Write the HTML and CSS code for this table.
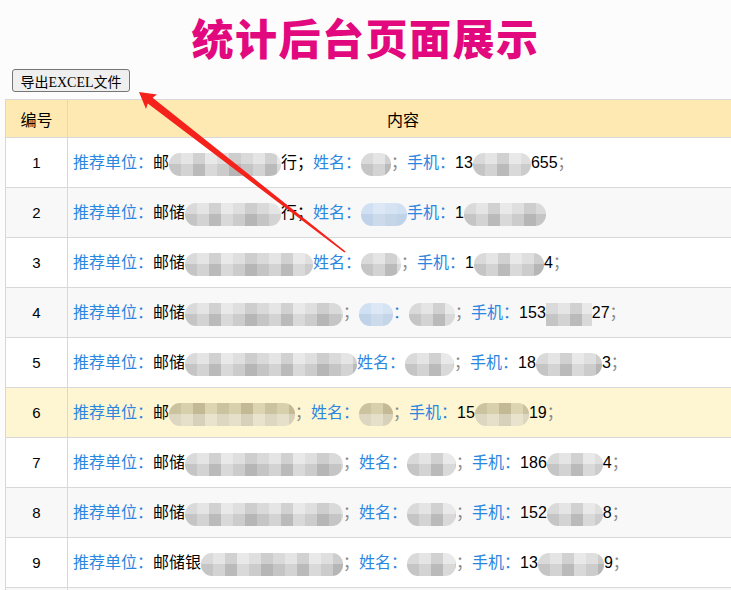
FILE: index.html
```html
<!DOCTYPE html>
<html>
<head>
	<meta charset="utf-8">
	<link rel="stylesheet" href="styles.css">
</head>
<body>
	<h1>统计后台页面展示</h1>
	<div class="toolbar">
		<button type="button">导出EXCEL文件</button>
	</div>

	<table class="list">
		<thead>
			<tr>
				<th class="col-no">编号</th>
				<th>内容</th>
			</tr>
		</thead>
		<tbody>
			<tr>
				<td class="col-no">1</td>
				<td><span class="lbl">推荐单位：</span>邮<span class="mask" style="width:112px"></span>行；<span class="lbl">姓名：</span><span class="mask" style="width:30px"></span><span class="semi">；</span><span class="lbl">手机：</span><span class="num">13</span><span class="mask" style="width:58px"></span><span class="num">655</span><span class="semi">；</span></td>
			</tr>
			<tr>
				<td class="col-no">2</td>
				<td><span class="lbl">推荐单位：</span>邮储<span class="mask" style="width:96px"></span>行；<span class="lbl">姓名：</span><span class="mask mask-blue" style="width:46px"></span><span class="lbl">手机：</span><span class="num">1</span><span class="mask" style="width:82px"></span></td>
			</tr>
			<tr>
				<td class="col-no">3</td>
				<td><span class="lbl">推荐单位：</span>邮储<span class="mask" style="width:128px"></span><span class="lbl">姓名：</span><span class="mask" style="width:40px"></span><span class="semi">；</span><span class="lbl">手机：</span><span class="num">1</span><span class="mask" style="width:70px"></span><span class="num">4</span><span class="semi">；</span></td>
			</tr>
			<tr>
				<td class="col-no">4</td>
				<td><span class="lbl">推荐单位：</span>邮储<span class="mask" style="width:158px"></span><span class="semi">；</span><span class="mask mask-blue" style="width:34px"></span><span class="lbl">：</span><span class="mask" style="width:46px"></span><span class="semi">；</span><span class="lbl">手机：</span><span class="num">153</span><span class="mask mask-flat" style="width:46px"></span><span class="num">27</span><span class="semi">；</span></td>
			</tr>
			<tr>
				<td class="col-no">5</td>
				<td><span class="lbl">推荐单位：</span>邮储<span class="mask" style="width:172px"></span><span class="lbl">姓名：</span><span class="mask" style="width:49px"></span><span class="semi">；</span><span class="lbl">手机：</span><span class="num">18</span><span class="mask" style="width:66px"></span><span class="num">3</span><span class="semi">；</span></td>
			</tr>
			<tr class="active">
				<td class="col-no">6</td>
				<td><span class="lbl">推荐单位：</span>邮<span class="mask mask-warm" style="width:126px"></span><span class="semi">；</span><span class="lbl">姓名：</span><span class="mask mask-warm" style="width:34px"></span><span class="semi">；</span><span class="lbl">手机：</span><span class="num">15</span><span class="mask mask-warm" style="width:54px"></span><span class="num">19</span><span class="semi">；</span></td>
			</tr>
			<tr>
				<td class="col-no">7</td>
				<td><span class="lbl">推荐单位：</span>邮储<span class="mask" style="width:158px"></span><span class="semi">；</span><span class="lbl">姓名：</span><span class="mask" style="width:49px"></span><span class="semi">；</span><span class="lbl">手机：</span><span class="num">186</span><span class="mask" style="width:56px"></span><span class="num">4</span><span class="semi">；</span></td>
			</tr>
			<tr>
				<td class="col-no">8</td>
				<td><span class="lbl">推荐单位：</span>邮储<span class="mask" style="width:158px"></span><span class="semi">；</span><span class="lbl">姓名：</span><span class="mask" style="width:49px"></span><span class="semi">；</span><span class="lbl">手机：</span><span class="num">152</span><span class="mask" style="width:56px"></span><span class="num">8</span><span class="semi">；</span></td>
			</tr>
			<tr>
				<td class="col-no">9</td>
				<td><span class="lbl">推荐单位：</span>邮储银<span class="mask" style="width:142px"></span><span class="semi">；</span><span class="lbl">姓名：</span><span class="mask" style="width:49px"></span><span class="semi">；</span><span class="lbl">手机：</span><span class="num">13</span><span class="mask" style="width:66px"></span><span class="num">9</span><span class="semi">；</span></td>
			</tr>
			<tr>
				<td class="col-no"></td>
				<td></td>
			</tr>
		</tbody>
	</table>

	<svg class="pointer" width="731" height="590" viewBox="0 0 731 590">
		<polygon fill="#f4221a" points="139,92 157,94.5 152.6,97.8 345.6,251.4 344.4,252.6 147.8,103.6 146,109"/>
	</svg>
</body>
</html>
```

FILE: styles.css
```css
html,
body {
	overflow: hidden;
}

body {
	margin: 0;
	position: relative;
	background: #fcfcfc;
	font-family: "Liberation Sans", "Noto Sans CJK SC", sans-serif;
	font-size: 16px;
	color: #000;
}

h1 {
	margin: 16px 0 0;
	font-size: 42px;
	line-height: 50px;
	letter-spacing: 1.5px;
	text-align: center;
	color: #e2087e;
	font-weight: 900;
}

.toolbar {
	margin: 3px 0 0 12px;
}

.toolbar>button {
	height: 23px;
	width: 118px;
	padding: 0;
	font-family: "Liberation Serif", "Noto Sans CJK SC", serif;
	font-size: 14px;
	background: #efefef;
	border: 1px solid #767676;
	border-radius: 3px;
	color: #000;
}

.list {
	margin: 7px 0 0 5px;
	width: 734px;
	border-collapse: collapse;
}

.list th,
.list td {
	border: 1px solid #d8d8d8;
	padding: 0 5px;
	white-space: nowrap;
}

.list th {
	height: 37px;
	background: #fde9b1;
	font-weight: normal;
	text-align: center;
}

.list td {
	height: 49px;
	background: #fff;
}

.list tbody tr:nth-child(even) td {
	background: #f8f8f8;
}

.list tbody tr.active td {
	background: #fef5d2;
}

.col-no {
	width: 51px;
	text-align: center;
}

.list td.col-no {
	font-size: 15px;
}

.lbl {
	color: #2b86e0;
}

.semi {
	color: #888;
}

.mask {
	display: inline-block;
	height: 23px;
	vertical-align: middle;
	border-radius: 11px;
	filter: blur(0.6px);
	background:
		linear-gradient(180deg, rgba(255, 255, 255, 0.25) 0 50%, rgba(0, 0, 0, 0.04) 50% 100%),
		repeating-linear-gradient(90deg, #cdcdcd 0 12px, #dcdcdc 12px 24px, #c2c2c2 24px 36px, #e2e2e2 36px 48px, #d4d4d4 48px 60px, #bdbdbd 60px 72px);
}

.mask-flat {
	border-radius: 0;
}

.mask-blue {
	background:
		linear-gradient(180deg, rgba(255, 255, 255, 0.2) 0 50%, rgba(0, 0, 0, 0.03) 50% 100%),
		repeating-linear-gradient(90deg, #c5d9f0 0 12px, #d3e2f3 12px 24px, #cbdcef 24px 36px);
}

.mask-warm {
	background:
		linear-gradient(180deg, rgba(255, 255, 255, 0) 0 50%, rgba(255, 255, 255, 0.35) 50% 100%),
		repeating-linear-gradient(90deg, #cbc2a0 0 12px, #d8cfad 12px 24px, #c3b994 24px 36px, #ddd4b3 36px 48px);
}

.pointer {
	position: absolute;
	top: 0;
	left: 0;
	pointer-events: none;
}
```
